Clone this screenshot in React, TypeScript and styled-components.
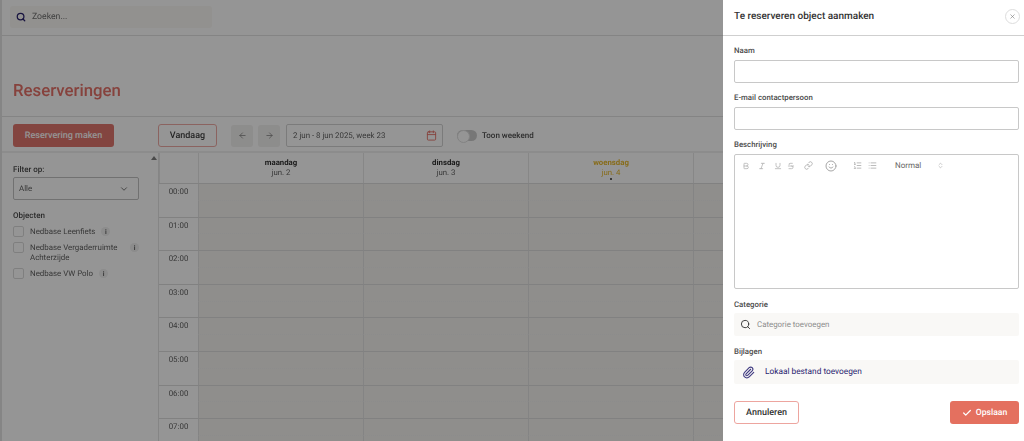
import React from 'react';
import styled, { createGlobalStyle } from 'styled-components';
import {
  ArrowLeft, ArrowRight, Bold, Calendar, Check, ChevronDown, ChevronsUpDown, Italic, Link,
  List, ListOrdered, Paperclip, Search, Smile, Strikethrough, Underline, X,
} from 'lucide-react';

const GlobalStyle = createGlobalStyle`
  html, body { margin: 0; height: 100%; overflow: hidden; background: #fff; }
  body { font-family: Roboto, "Liberation Sans", sans-serif; color: #2b2b2b; text-rendering: geometricPrecision; }
  * { box-sizing: border-box; }
  button { text-rendering: geometricPrecision; }
`;

const Page = styled.div`
  display: flex;
  flex-direction: column;
  width: 1024px;
  height: 441px;
  overflow: hidden;
  border-left: 2px solid #e2e2e2;
  filter: blur(0.6px);
`;

const TopBar = styled.div`
  display: flex;
  align-items: center;
  height: 36px;
  flex: none;
  padding: 0 0 2px 8px;
  border-bottom: 1px solid #e0e0e0;
`;

const SearchBox = styled.div`
  display: flex;
  align-items: center;
  gap: 6px;
  width: 202px;
  height: 22px;
  padding-left: 6px;
  background: #faf8f4;
  border-radius: 3px;
  color: #1c1464;
  font-size: 8.7px;
  span { color: #666; }
`;

const TitleRow = styled.div`
  display: flex;
  align-items: flex-end;
  height: 81px;
  flex: none;
  padding: 0 0 14px 11px;
  border-bottom: 1px solid #e0e0e0;
`;

const Title = styled.h1`
  margin: 0;
  color: #e4695f;
  font-size: 16.8px;
  line-height: 22px;
  font-weight: 500;
`;

const Toolbar = styled.div`
  display: flex;
  align-items: center;
  height: 36px;
  flex: none;
  padding: 3px 0 0 11px;
  border-bottom: 2px solid #eeeeee;
`;

const PrimaryButton = styled.button`
  width: 101px;
  height: 23px;
  margin-right: 44px;
  padding: 0;
  border: 0;
  border-radius: 3px;
  background: #dd665c;
  color: #fff;
  font: 500 9px Roboto, sans-serif;
  opacity: 0.95;
`;

const OutlineButton = styled.button`
  width: ${(p: { $w: number }) => p.$w}px;
  height: 23px;
  padding: 0;
  background: #fff;
  border: 1px solid #eda59f;
  border-radius: 3px;
  color: #333;
  font: 500 9px Roboto, sans-serif;
`;

const ArrowButton = styled.div`
  display: flex;
  align-items: center;
  justify-content: center;
  width: 22px;
  height: 22px;
  margin-left: 5px;
  border-radius: 3px;
  background: #f1f0ee;
  color: #777;
  &:first-of-type { margin-left: 14px; }
`;

const DateField = styled.div`
  display: flex;
  align-items: center;
  justify-content: space-between;
  width: 157px;
  height: 23px;
  margin-left: 6px;
  padding: 0 5px 0 6px;
  border: 1px solid #cfcfcf;
  border-radius: 2px;
  font-size: 7.9px;
  color: #555;
  svg { color: #e4695f; }
`;

const Toggle = styled.div`
  width: 20px;
  height: 11px;
  margin-left: 14px;
  border-radius: 6px;
  background: #c9c9c9;
  &::before {
    content: '';
    display: block;
    width: 11px;
    height: 11px;
    border-radius: 50%;
    background: #fff;
    border: 1px solid #ddd;
  }
`;

const ToggleLabel = styled.span`
  margin-left: 5px;
  font-size: 8px;
  font-weight: 500;
  color: #444;
`;

const Body = styled.div`
  display: flex;
  flex: 1;
  min-height: 0;
`;

const Sidebar = styled.aside`
  position: relative;
  width: 156px;
  flex: none;
  padding: 11px 19px 0 11px;
`;

const ScrollArrow = styled.div`
  position: absolute;
  top: 3px;
  right: 1px;
  border: 3px solid transparent;
  border-top: 0;
  border-bottom: 4px solid #777;
`;

const SideLabel = styled.div`
  font-size: 8px;
  line-height: 11px;
  font-weight: 500;
  color: #3c3c3c;
`;

const FilterSelect = styled.div`
  display: flex;
  align-items: center;
  justify-content: space-between;
  height: 23px;
  margin: 2px 0 10px;
  padding: 0 9px 0 5px;
  border: 1px solid #bdbdbd;
  border-radius: 2px;
  font-size: 7.9px;
  color: #555;
`;

const ObjectRow = styled.div`
  display: flex;
  gap: 6px;
  margin-top: 5px;
  font-size: 7.9px;
  line-height: 10px;
  color: #555;
`;

const CheckBox = styled.div`
  width: 11px;
  height: 11px;
  flex: none;
  border: 1px solid #d8d8d8;
  border-radius: 2px;
`;

const ObjectName = styled.div`
  padding-top: 1px;
  width: ${(p: { $wide?: boolean }) => (p.$wide ? '98px' : 'auto')};
`;

const InfoDot = styled.div`
  display: flex;
  align-items: center;
  justify-content: center;
  width: 9px;
  height: 9px;
  margin-top: 1px;
  border-radius: 50%;
  background: #eeeeee;
  font-size: 6.5px;
  font-weight: 700;
  color: #555;
`;

const Grid = styled.div`
  flex: 1;
  display: grid;
  grid-template-columns: 39px repeat(5, 165px);
  grid-template-rows: 30px;
  grid-auto-rows: 16.8px;
  border-left: 1px solid #e2e2e2;
  align-content: start;
`;

const HeadCell = styled.div`
  padding-top: 5px;
  text-align: center;
  font-size: 7.8px;
  line-height: 9.5px;
  color: ${(p: { $today?: boolean }) => (p.$today ? '#e6b420' : '#555')};
  border-left: 1px solid #e6e6e6;
  b { display: block; font-weight: 700; color: ${(p: { $today?: boolean }) => (p.$today ? '#e6b420' : '#222')}; }
  i { display: block; width: 2px; height: 2px; margin: 1px auto 0; border-radius: 50%; background: #222; }
`;

const TimeCell = styled.div`
  grid-row: span 2;
  padding-top: 3px;
  text-align: center;
  font-size: 7.9px;
  line-height: 10px;
  color: #555;
  border-top: 1px solid #dadada;
`;

const SlotCell = styled.div`
  background: #f5f3ef;
  border-left: 1px solid #e0e0e0;
  border-top: ${(p: { $half?: boolean }) => (p.$half ? '1px dotted #eeeeee' : '1px solid #dadada')};
`;

const Overlay = styled.div`
  position: fixed;
  inset: 0;
  background: rgba(20, 20, 20, 0.45);
`;

const Panel = styled.aside`
  position: fixed;
  top: 0;
  right: 0;
  bottom: 0;
  width: 301px;
  display: flex;
  flex-direction: column;
  background: #fff;
`;

const PanelHead = styled.div`
  display: flex;
  align-items: center;
  justify-content: space-between;
  height: 36px;
  flex: none;
  padding: 0 4px 3px 11px;
  border-bottom: 1px solid #cfcfcf;
`;

const PanelTitle = styled.div`
  font-size: 10px;
  font-weight: 500;
  color: #333;
`;

const CloseButton = styled.div`
  display: flex;
  align-items: center;
  justify-content: center;
  width: 15px;
  height: 15px;
  margin-top: 1px;
  border: 1px solid #dddddd;
  border-radius: 50%;
  color: #777;
`;

const Form = styled.div`
  display: flex;
  flex-direction: column;
  padding: 10px 5px 0 11px;
`;

const FieldLabel = styled.label`
  height: ${(p: { $tight?: boolean }) => (p.$tight ? 13 : 14)}px;
  font-size: 7.8px;
  line-height: 10px;
  font-weight: 500;
  color: #4a4a4a;
`;

const TextInput = styled.div`
  height: 23px;
  margin-bottom: 10px;
  border: 1px solid #c8c8c8;
  border-radius: 2px;
`;

const Editor = styled.div`
  height: 135px;
  margin-bottom: 11px;
  border: 1px solid #c8c8c8;
  border-radius: 2px;
`;

const EditorTools = styled.div`
  display: flex;
  align-items: center;
  height: 21px;
  padding-left: 7px;
  color: #a6a6a6;
`;

const ToolIcon = styled.span`
  display: flex;
  width: ${(p: { $w: number }) => p.$w}px;
`;

const ToolText = styled.span`
  margin-left: 17px;
  width: 42px;
  font-size: 8px;
  color: #666;
`;

const GreyField = styled.div`
  display: flex;
  align-items: center;
  height: ${(p: { $h: number }) => p.$h}px;
  margin-bottom: 11px;
  background: #f9f8f6;
  border-radius: 2px;
  svg { flex: none; }
`;

const CategoryIcon = styled(Search)`
  margin-left: 6px;
  color: #333;
`;

const ClipIcon = styled(Paperclip)`
  margin-left: 8px;
  color: #3f3a80;
`;

const CategoryHint = styled.span`
  margin-left: 6px;
  font-size: 7.9px;
  color: #8d8d8d;
`;

const FileLink = styled.span`
  margin-left: 10px;
  font-size: 8.3px;
  color: #2a2470;
`;

const FormFooter = styled.div`
  display: flex;
  justify-content: space-between;
  margin-top: 6px;
`;

const SaveButton = styled.button`
  display: flex;
  align-items: center;
  justify-content: center;
  gap: 4px;
  width: 69px;
  height: 23px;
  padding: 0;
  border: 0;
  border-radius: 3px;
  background: #e4705f;
  color: #fff;
  font: 500 8.6px Roboto, sans-serif;
`;

const days = [
  { name: 'maandag', date: 'jun. 2' },
  { name: 'dinsdag', date: 'jun. 3' },
  { name: 'woensdag', date: 'jun. 4', today: true },
  { name: 'donderdag', date: 'jun. 5' },
  { name: 'vrijdag', date: 'jun. 6' },
];
const hours = ['00:00', '01:00', '02:00', '03:00', '04:00', '05:00', '06:00', '07:00'];

export default function App() {
  return (
    <>
      <GlobalStyle />
      <Page>
        <TopBar>
          <SearchBox>
            <Search size={10} strokeWidth={3} />
            <span>Zoeken...</span>
          </SearchBox>
        </TopBar>
        <TitleRow>
          <Title>Reserveringen</Title>
        </TitleRow>
        <Toolbar>
          <PrimaryButton>Reservering maken</PrimaryButton>
          <OutlineButton $w={59}>Vandaag</OutlineButton>
          <ArrowButton><ArrowLeft size={9} /></ArrowButton>
          <ArrowButton><ArrowRight size={9} /></ArrowButton>
          <DateField>
            2 jun - 8 jun 2025, week 23
            <Calendar size={11} />
          </DateField>
          <Toggle />
          <ToggleLabel>Toon weekend</ToggleLabel>
        </Toolbar>
        <Body>
          <Sidebar>
            <ScrollArrow />
            <SideLabel>Filter op:</SideLabel>
            <FilterSelect>
              Alle
              <ChevronDown size={10} />
            </FilterSelect>
            <SideLabel>Objecten</SideLabel>
            <ObjectRow>
              <CheckBox />
              <ObjectName>Nedbase Leenfiets</ObjectName>
              <InfoDot>i</InfoDot>
            </ObjectRow>
            <ObjectRow>
              <CheckBox />
              <ObjectName $wide>Nedbase Vergaderruimte Achterzijde</ObjectName>
              <InfoDot>i</InfoDot>
            </ObjectRow>
            <ObjectRow>
              <CheckBox />
              <ObjectName>Nedbase VW Polo</ObjectName>
              <InfoDot>i</InfoDot>
            </ObjectRow>
          </Sidebar>
          <Grid>
            <HeadCell />
            {days.map((d) => (
              <HeadCell key={d.name} $today={d.today}>
                <b>{d.name}</b>
                {d.date}
                {d.today && <i />}
              </HeadCell>
            ))}
            {hours.map((h) => (
              <React.Fragment key={h}>
                <TimeCell>{h}</TimeCell>
                {days.map((d) => <SlotCell key={d.name} />)}
                {days.map((d) => <SlotCell key={d.name} $half />)}
              </React.Fragment>
            ))}
          </Grid>
        </Body>
      </Page>
      <Overlay />
      <Panel>
        <PanelHead>
          <PanelTitle>Te reserveren object aanmaken</PanelTitle>
          <CloseButton><X size={7} /></CloseButton>
        </PanelHead>
        <Form>
          <FieldLabel>Naam</FieldLabel>
          <TextInput />
          <FieldLabel>E-mail contactpersoon</FieldLabel>
          <TextInput />
          <FieldLabel>Beschrijving</FieldLabel>
          <Editor>
            <EditorTools>
              <ToolIcon $w={16}><Bold size={8} /></ToolIcon>
              <ToolIcon $w={16}><Italic size={8} /></ToolIcon>
              <ToolIcon $w={13}><Underline size={8} /></ToolIcon>
              <ToolIcon $w={17}><Strikethrough size={8} /></ToolIcon>
              <ToolIcon $w={21}><Link size={9} /></ToolIcon>
              <ToolIcon $w={28}><Smile size={12} /></ToolIcon>
              <ToolIcon $w={15}><ListOrdered size={9} /></ToolIcon>
              <ToolIcon $w={10}><List size={9} /></ToolIcon>
              <ToolText>Normal</ToolText>
              <ToolIcon $w={8}><ChevronsUpDown size={7} /></ToolIcon>
            </EditorTools>
          </Editor>
          <FieldLabel $tight>Categorie</FieldLabel>
          <GreyField $h={23}>
            <CategoryIcon size={11} />
            <CategoryHint>Categorie toevoegen</CategoryHint>
          </GreyField>
          <FieldLabel $tight>Bijlagen</FieldLabel>
          <GreyField $h={24}>
            <ClipIcon size={13} />
            <FileLink>Lokaal bestand toevoegen</FileLink>
          </GreyField>
          <FormFooter>
            <OutlineButton $w={65}>Annuleren</OutlineButton>
            <SaveButton><Check size={10} strokeWidth={3} />Opslaan</SaveButton>
          </FormFooter>
        </Form>
      </Panel>
    </>
  );
}
